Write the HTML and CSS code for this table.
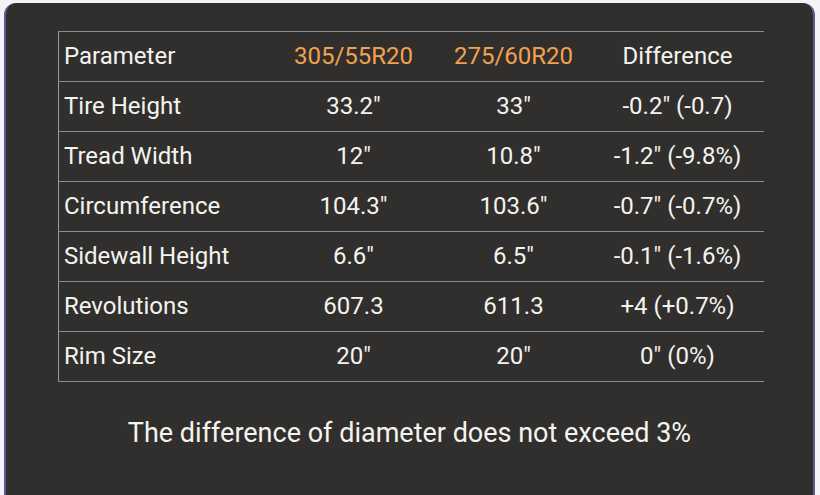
FILE: index.html
```html
<!DOCTYPE html>
<html>
<head>
<meta charset="utf-8">
<link rel="stylesheet" href="styles.css">
</head>
<body>
<div class="card">
  <table class="cmp">
    <colgroup>
      <col class="c1"><col class="c2"><col class="c3"><col class="c4">
    </colgroup>
    <tr class="head">
      <td class="name">Parameter</td>
      <td class="tire">305/55R20</td>
      <td class="tire">275/60R20</td>
      <td>Difference</td>
    </tr>
    <tr><td class="name">Tire Height</td><td>33.2"</td><td>33"</td><td>-0.2" (-0.7)</td></tr>
    <tr><td class="name">Tread Width</td><td>12"</td><td>10.8"</td><td>-1.2" (-9.8%)</td></tr>
    <tr><td class="name">Circumference</td><td>104.3"</td><td>103.6"</td><td>-0.7" (-0.7%)</td></tr>
    <tr><td class="name">Sidewall Height</td><td>6.6"</td><td>6.5"</td><td>-0.1" (-1.6%)</td></tr>
    <tr><td class="name">Revolutions</td><td>607.3</td><td>611.3</td><td>+4 (+0.7%)</td></tr>
    <tr><td class="name">Rim Size</td><td>20"</td><td>20"</td><td>0" (0%)</td></tr>
  </table>
  <p class="note">The difference of diameter does not exceed 3%</p>
</div>
</body>
</html>
```

FILE: styles.css
```css
html, body {
  margin: 0;
  padding: 0;
  background: #f3f2f7;
  font-family: Roboto, "Liberation Sans", sans-serif;
}
.card {
  margin: 3px 4px 0 4px;
  width: 811px;
  height: 492px;
  box-sizing: border-box;
  background: #312e2e;
  border-radius: 12px 12px 0 0;
  border-left: 2px solid #5c5a92;
  border-right: 2px solid #5c5a92;
  padding-top: 28px;
  color: #f4f4ee;
}
.cmp {
  margin-left: 52px;
  border-collapse: collapse;
  table-layout: fixed;
  width: 705px;
  font-size: 24px;
}
.c1 { width: 213px; }
.c2 { width: 164px; }
.c3 { width: 156px; }
.c4 { width: 172px; }
.cmp td {
  height: 47px;
  padding: 0 0 2px 0;
  text-align: center;
  border-top: 1px solid #8c8a8a;
  border-bottom: 1px solid #8c8a8a;
  white-space: nowrap;
}
.cmp td.name {
  text-align: left;
  padding-left: 5px;
  border-left: 1px solid #9a9898;
}
.cmp .tire {
  color: #f2a24e;
}
.note {
  margin: 35px 0 0 0;
  text-align: center;
  font-size: 27px;
}
```
